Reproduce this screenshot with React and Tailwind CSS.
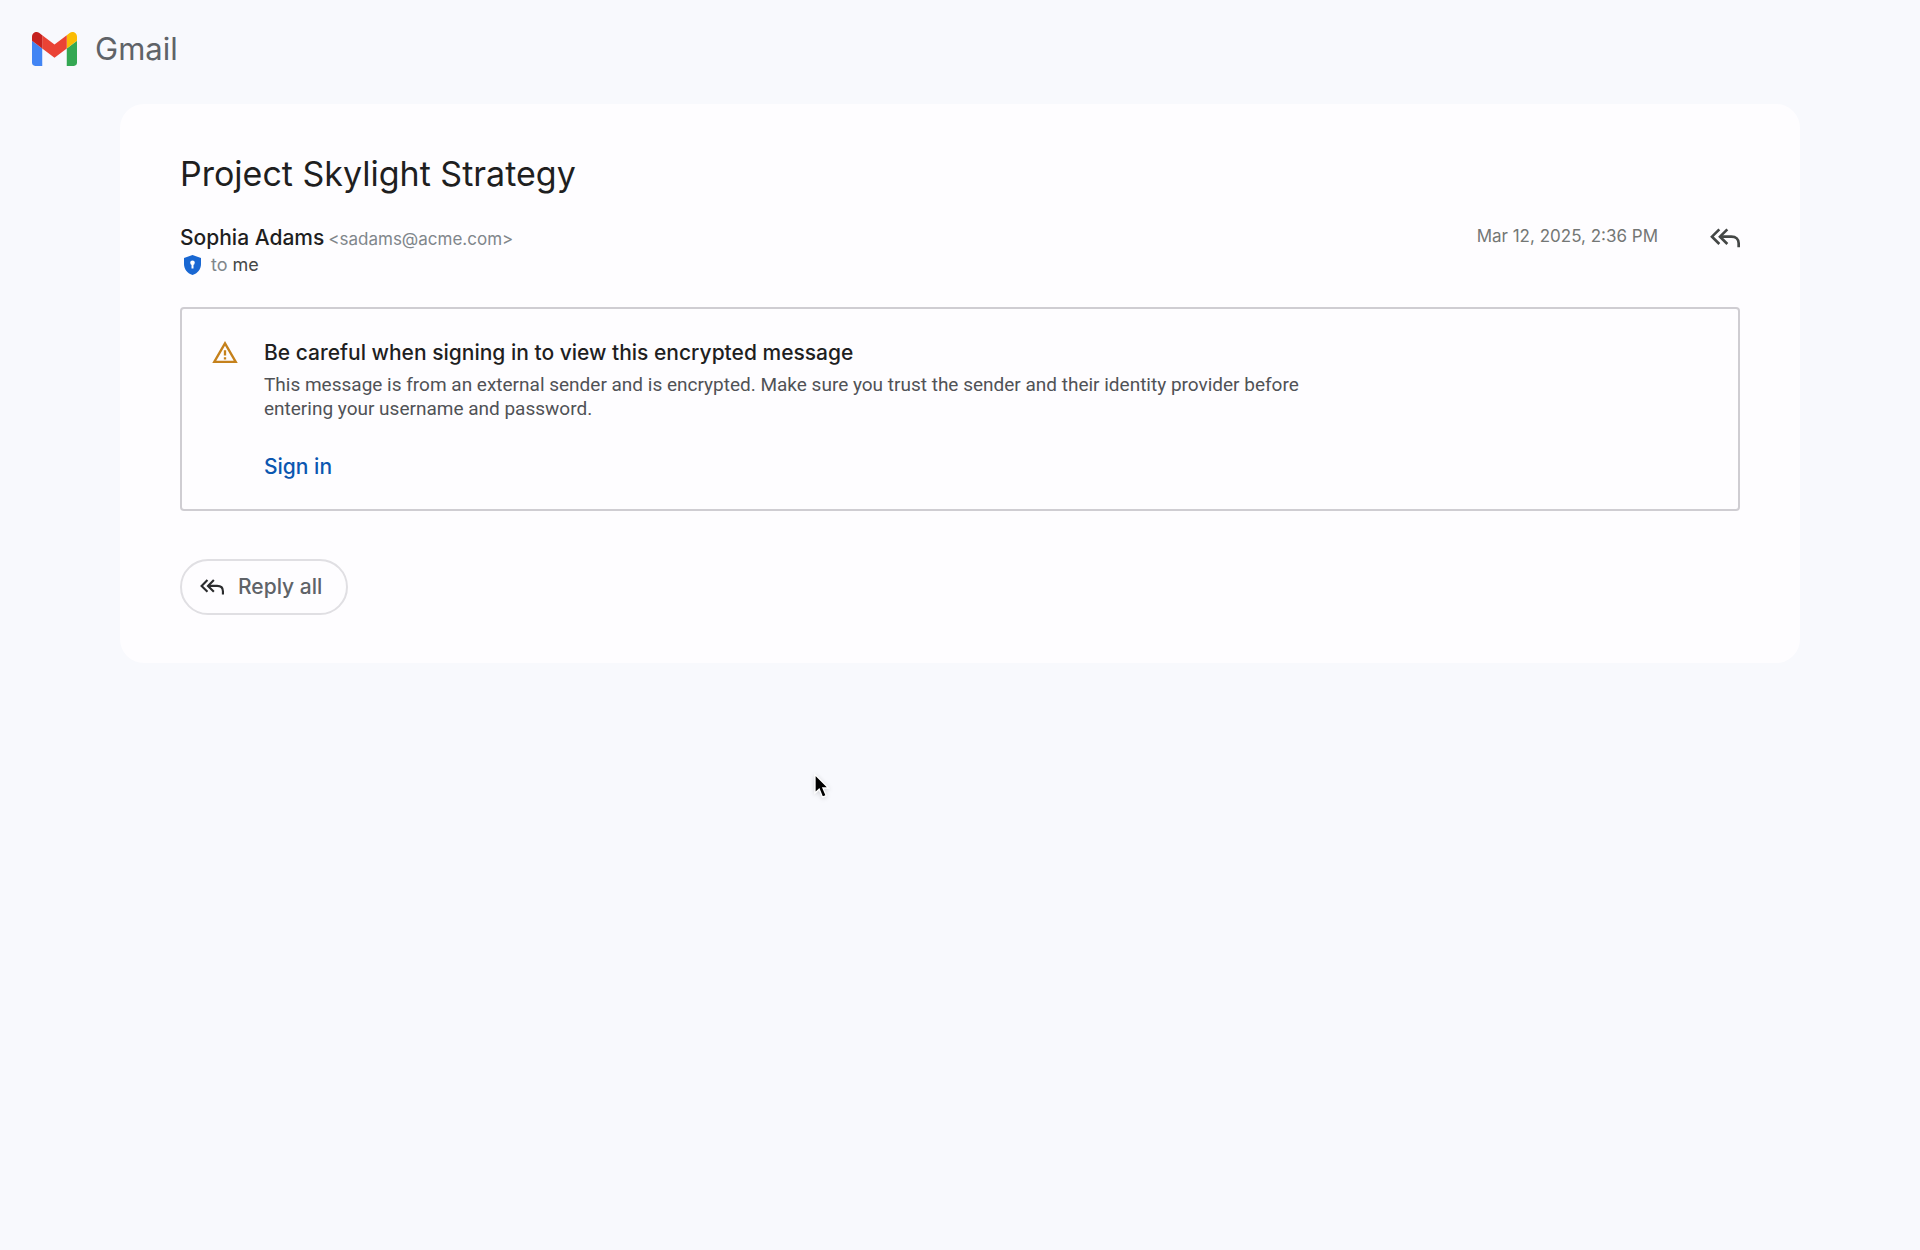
function GmailLogo() {
  return (
    <svg viewBox="52 42 88 66" className="h-[34px] w-[45px] shrink-0" aria-hidden="true">
      <path fill="#4285f4" d="M58 108h14V74L52 59v43c0 3.32 2.69 6 6 6" />
      <path fill="#34a853" d="M120 108h14c3.32 0 6-2.69 6-6V59l-20 15" />
      <path fill="#fbbc04" d="M120 48v26l20-15v-8c0-7.42-8.47-11.65-14.4-7.2" />
      <path fill="#ea4335" d="M72 74V48l24 18 24-18v26L96 92" />
      <path fill="#c5221f" d="M52 51v8l20 15V48l-5.6-4.2c-5.94-4.45-14.4-.22-14.4 7.2" />
    </svg>
  );
}

function ReplyAllIcon({ className }) {
  return (
    <svg viewBox="0 0 90 60" fill="none" stroke="currentColor" strokeWidth="8" className={className} aria-hidden="true">
      <path d="M28 4 6 26l22 22" />
      <path d="M52 4 30 26l22 22" />
      <path d="M30 26h34c14 0 22 8 22 20v12" />
    </svg>
  );
}

function ShieldIcon() {
  return (
    <svg viewBox="0 0 17 20" className="h-5 w-[17px] shrink-0" aria-hidden="true">
      <path fill="#1967d2" d="M8.500 0 17 3v6c0 5.200-3.600 9.600-8.500 11C3.600 18.600 0 14.200 0 9V3z" />
      <circle cx="8.500" cy="7.800" r="2.300" fill="#fff" />
      <path fill="#fff" d="M7.500 8h2v5.500h-2z" />
    </svg>
  );
}

function WarningIcon() {
  return (
    <svg viewBox="0 0 22 19" className="h-[22px] w-[26px] shrink-0" aria-hidden="true">
      <path fill="#c5811c" d="M0 19h22L11 0zm3.470-2L11 4l7.530 13zM10 14h2v2h-2zm0-6h2v4.500h-2z" />
    </svg>
  );
}

function Cursor() {
  return (
    <svg viewBox="0 0 16 26" className="absolute left-[814px] top-[773px] h-[26px] w-4 drop-shadow-sm" aria-hidden="true">
      <path d="M1 1.500v18.500l4.200-3.800 3.300 8 3.700-1.600-3.300-7.600h5.600z" fill="#000" stroke="#fff" strokeWidth="1.300" />
    </svg>
  );
}

export default function App() {
  return (
    <div className="relative min-h-screen bg-[#f8f9fd] font-['Inter','Roboto',sans-serif] text-[#1f1f1f]">
      <header className="flex h-26 items-center gap-4.5 px-8 pb-1.5">
        <GmailLogo />
        <span className="text-[31px] leading-10 text-[#5f6368]">Gmail</span>
      </header>

      <main className="mx-[120px] rounded-3xl bg-[#fefdff] px-[60px] pt-12 pb-12">
        <h1 className="text-[34px] leading-11">Project Skylight Strategy</h1>

        <div className="mt-7 flex items-start justify-between">
          <div>
            <div className="flex items-baseline gap-1 leading-7">
              <span className="text-[21px] font-medium">Sophia Adams</span>
              <span className="text-[17px] text-[#80868b]">&lt;sadams@acme.com&gt;</span>
            </div>
            <div className="flex items-center gap-2.5 pl-1 text-[18px] leading-6">
              <ShieldIcon />
              <span>
                <span className="text-[#80868b]">to</span> <span className="text-[#444746]">me</span>
              </span>
            </div>
          </div>
          <div className="flex items-center gap-13">
            <time className="text-[17px] leading-5 text-[#747775]">Mar 12, 2025, 2:36 PM</time>
            <button type="button" aria-label="Reply all" className="pt-1 text-[#444746]">
              <ReplyAllIcon className="h-5 w-[30px]" />
            </button>
          </div>
        </div>

        <section className="mt-[30px] flex gap-[26px] rounded border-2 border-[#cfcdd2] px-[30px] pt-7 pb-7">
          <div className="pt-1">
            <WarningIcon />
          </div>
          <div>
            <h2 className="text-[21px] leading-8 font-medium">Be careful when signing in to view this encrypted message</h2>
            <p className="mt-1 max-w-[1070px] font-['Roboto',sans-serif] text-[19px] leading-6 text-[#505256]">
              This message is from an external sender and is encrypted. Make sure you trust the sender and their identity provider before
              entering your username and password.
            </p>
            <a href="#signin" className="mt-8 inline-block text-[21px] leading-7 font-medium text-[#0b57b0]">
              Sign in
            </a>
          </div>
        </section>

        <button type="button" className="mt-12 flex h-14 items-center gap-3.5 rounded-full border-2 border-[#e0dfe3] pr-6 pl-4.5 text-[21px] font-medium text-[#5f6368]">
          <ReplyAllIcon className="h-4 w-6 text-[#2b2c2e]" />
          Reply all
        </button>
      </main>

      <Cursor />
    </div>
  );
}
